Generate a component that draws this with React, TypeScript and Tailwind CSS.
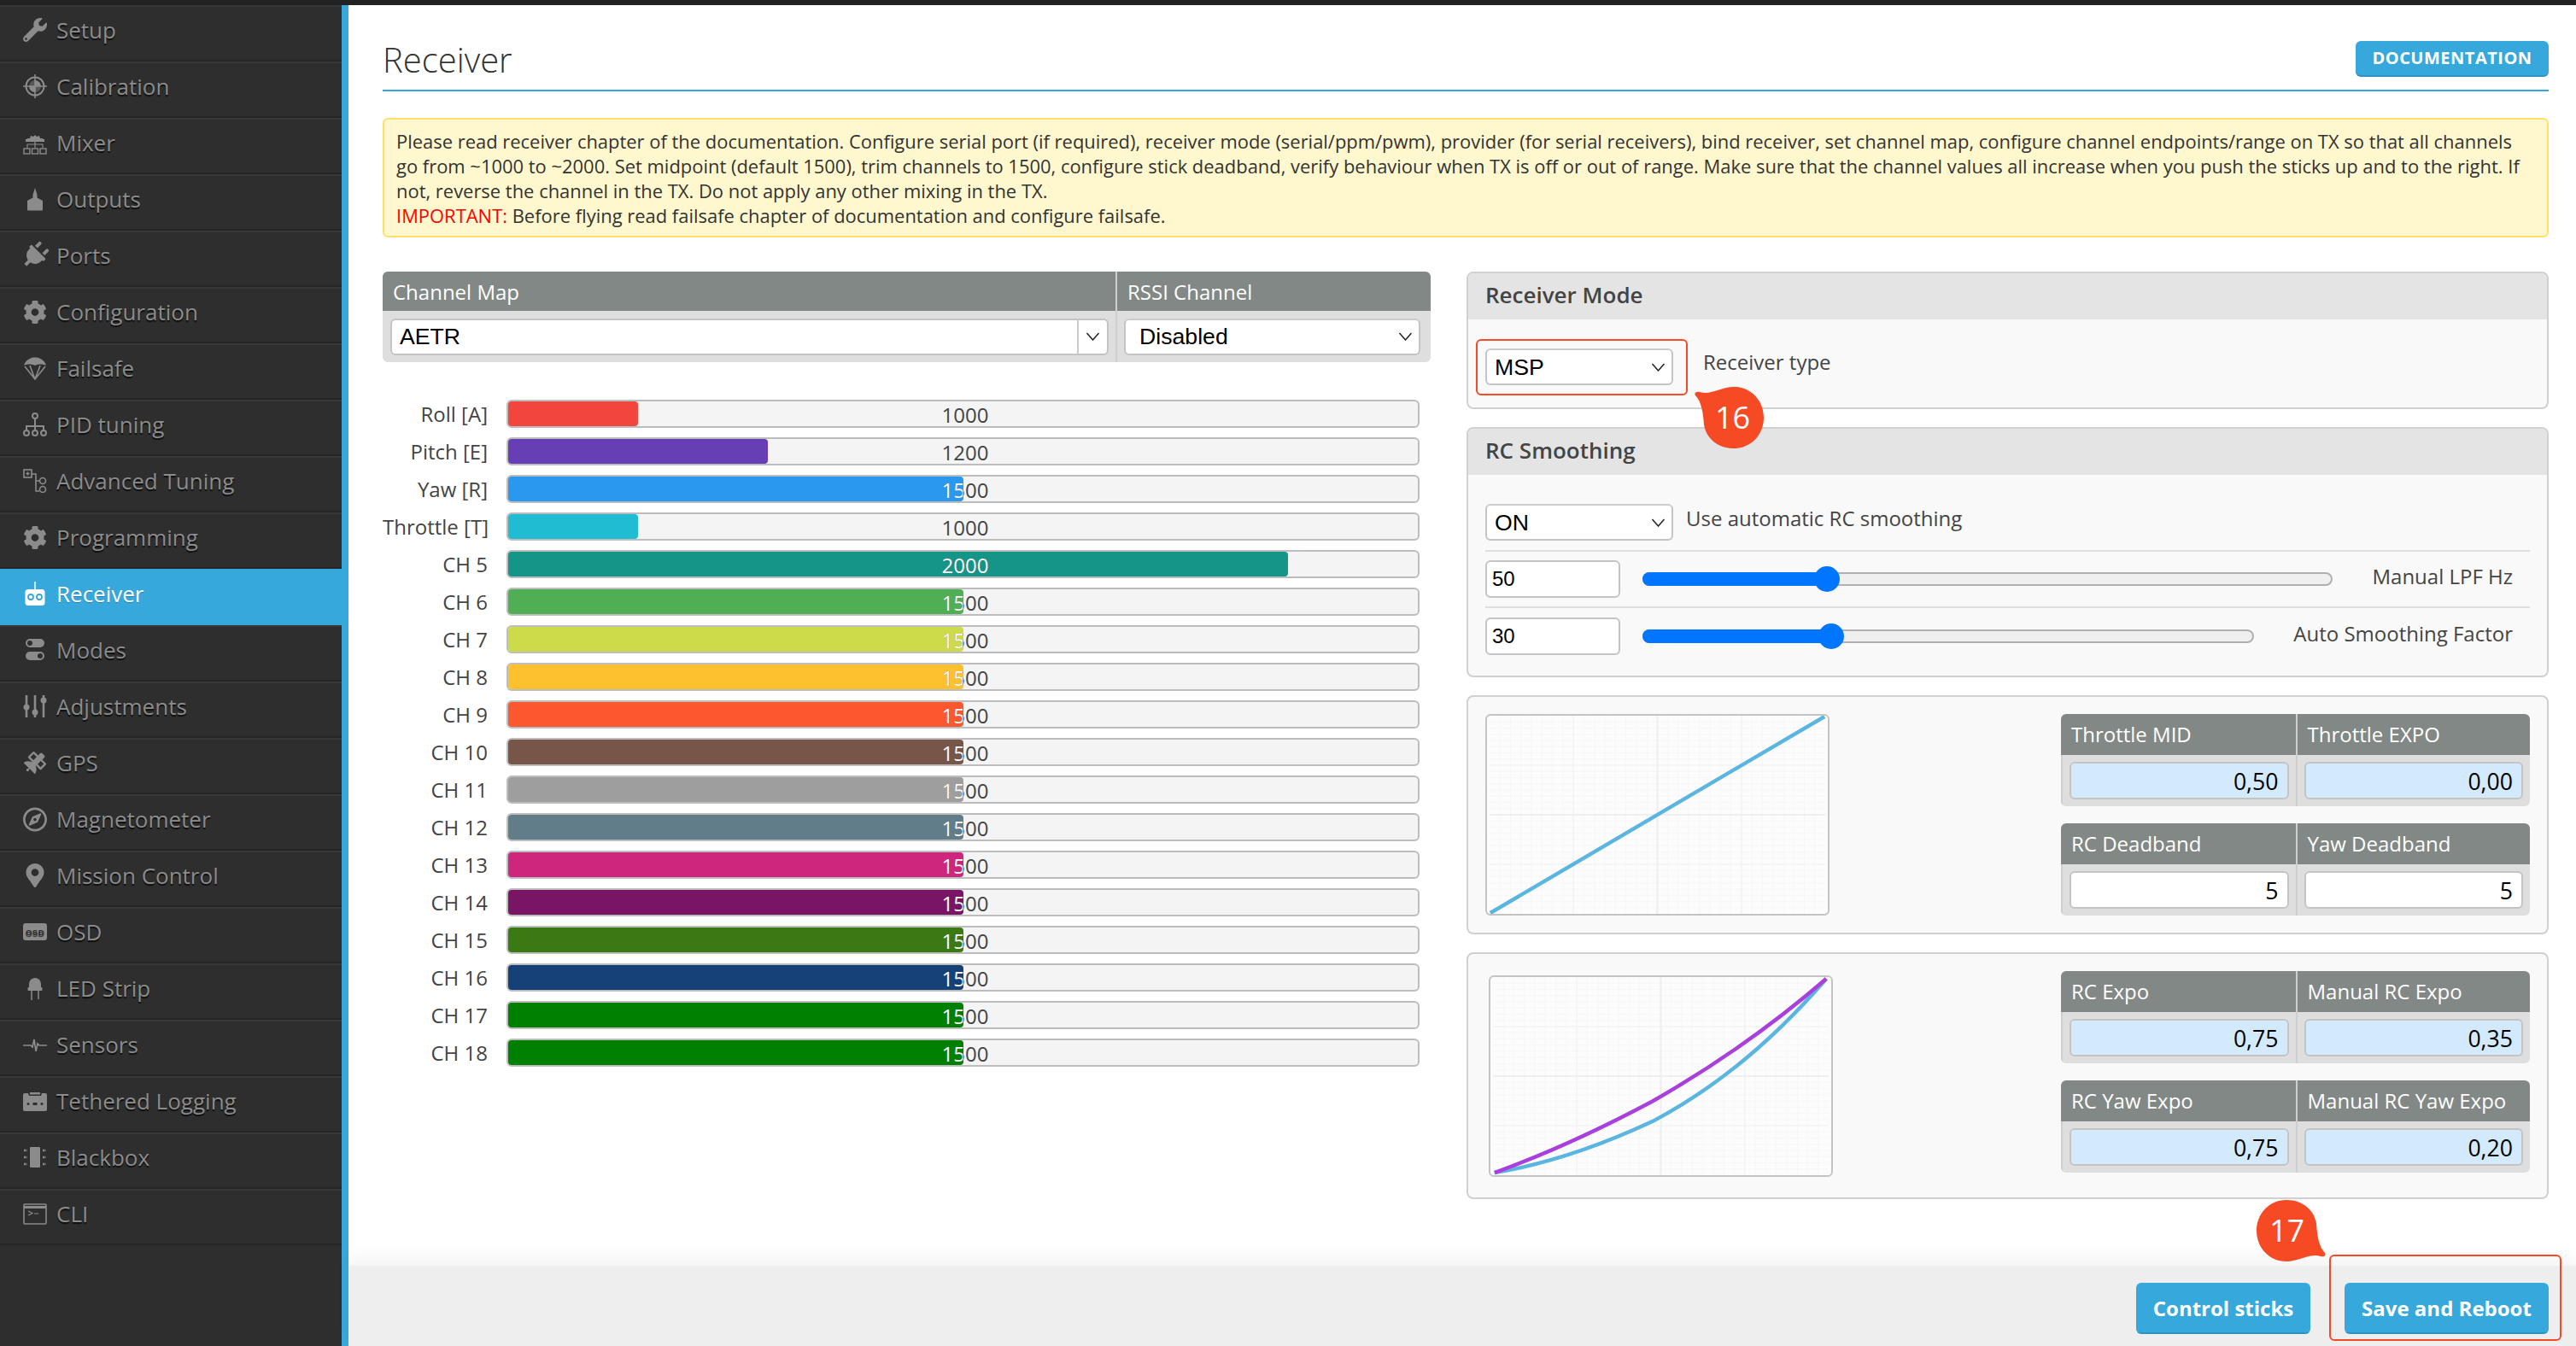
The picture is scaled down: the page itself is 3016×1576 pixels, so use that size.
import { ReactNode } from 'react';
import { FaCog, FaMapMarkerAlt, FaPlug, FaRegCompass, FaSatellite, FaWrench } from 'react-icons/fa';

const Svg = ({ children }: { children: ReactNode }) => (
  <svg width="28" height="28" viewBox="0 0 28 28" fill="currentColor">{children}</svg>
);

const icons: Record<string, ReactNode> = {
  Setup: <FaWrench size={28} />,
  Calibration: (
    <Svg>
      <circle cx="14" cy="14" r="10.5" fill="none" stroke="currentColor" strokeWidth="2" />
      <path d="M14 0v28M0 14h28" stroke="currentColor" strokeWidth="1.6" />
      <path d="M14 14V7a7 7 0 0 1 7 7ZM14 14v7a7 7 0 0 1-7-7Z" />
      <path d="M14 14V7a7 7 0 0 0-7 7ZM14 14v7a7 7 0 0 0 7-7Z" opacity=".45" />
    </Svg>
  ),
  Mixer: (
    <Svg>
      <path d="M4 12l1-3 3 0 1-3 3 1 2-2 2 2 3-1 1 3 3 0 1 3h-6a5 5 0 0 0-8 0Z" />
      <rect x="3" y="10" width="22" height="3" />
      <path d="M14 9v7M5 20v-4h18v4M14 16v4" fill="none" stroke="currentColor" strokeWidth="1.2" />
      <rect x="1" y="21" width="7" height="6" fill="none" stroke="currentColor" strokeWidth="1.4" />
      <rect x="10.5" y="21" width="7" height="6" fill="none" stroke="currentColor" strokeWidth="1.4" />
      <rect x="20" y="21" width="7" height="6" fill="none" stroke="currentColor" strokeWidth="1.4" />
    </Svg>
  ),
  Outputs: <Svg><path d="M14 1l2.5 8v3.5L23 16v10.5q0 1-1 1H6q-1 0-1-1V16l6.500-3.500V9Z" /></Svg>,
  Ports: <FaPlug size={32} className="rotate-45" />,
  Configuration: <FaCog size={29} />,
  Failsafe: (
    <Svg>
      <path d="M1 11C3 4 9 1.500 14 1.500S25 4 27 11C23 9 18 9 14 11 10 9 5 9 1 11Z" />
      <path d="M2 12l12 15L26 12M8 11l6 16 6-16" fill="none" stroke="currentColor" strokeWidth="1.6" />
    </Svg>
  ),
  'PID tuning': (
    <Svg>
      <g fill="none" stroke="currentColor" strokeWidth="2">
        <circle cx="14" cy="4" r="3" />
        <circle cx="4" cy="24" r="3" />
        <circle cx="14" cy="24" r="3" />
        <circle cx="24" cy="24" r="3" />
        <path d="M14 7v14M4 21v-5h20v5" />
      </g>
    </Svg>
  ),
  'Advanced Tuning': (
    <Svg>
      <g fill="none" stroke="currentColor" strokeWidth="1.6">
        <rect x="1" y="1" width="9" height="9" />
        <path d="M3.500 5.500h4M5.500 3.500v4M10 6h5v20h4M15 14h4" />
        <circle cx="23" cy="14" r="3.500" />
        <circle cx="23" cy="24" r="3.500" />
      </g>
    </Svg>
  ),
  Programming: <FaCog size={29} />,
  Receiver: (
    <Svg>
      <path d="M14 0v11" stroke="currentColor" strokeWidth="1.5" />
      <rect x="2.500" y="9" width="23" height="19" rx="3.500" />
      <circle cx="9" cy="18" r="3" fill="none" stroke="#37a8db" strokeWidth="1.800" />
      <circle cx="19" cy="18" r="3" fill="none" stroke="#37a8db" strokeWidth="1.800" />
    </Svg>
  ),
  Modes: (
    <Svg>
      <path fillRule="evenodd" d="M8 1h12a5 5 0 0 1 0 10H8A5 5 0 0 1 8 1Zm0 2a3 3 0 1 0 0 6 3 3 0 0 0 0-6ZM8 16h12a5 5 0 0 1 0 10H8a5 5 0 0 1 0-10Zm12 2a3 3 0 1 0 0 6 3 3 0 0 0 0-6Z" />
    </Svg>
  ),
  Adjustments: (
    <Svg>
      <path d="M4 1v26M14 1v26M24 1v26" stroke="currentColor" strokeWidth="2.600" />
      <circle cx="4" cy="15" r="3.500" />
      <circle cx="14" cy="21" r="3.500" />
      <circle cx="24" cy="7" r="3.500" />
    </Svg>
  ),
  GPS: <FaSatellite size={26} />,
  Magnetometer: <FaRegCompass size={29} />,
  'Mission Control': <FaMapMarkerAlt size={28} />,
  OSD: (
    <Svg>
      <rect x="0" y="4" width="28" height="20" rx="3" />
      <text x="14" y="17.500" textAnchor="middle" fontFamily="'Liberation Sans', sans-serif" fontWeight="700" fontSize="9.500" letterSpacing=".5" fill="#2e2e2e">OSD</text>
    </Svg>
  ),
  'LED Strip': (
    <Svg>
      <path d="M7 13V9a7 7 0 0 1 14 0v4Z" />
      <rect x="5.500" y="13" width="17" height="4" rx="1" />
      <path d="M10 17v11M18 17v10" stroke="currentColor" strokeWidth="1.500" />
    </Svg>
  ),
  Sensors: (
    <Svg>
      <path d="M0 15h9l2 2 2-9 2 14 2-9 2 2h9" fill="none" stroke="currentColor" strokeWidth="1.700" />
    </Svg>
  ),
  'Tethered Logging': (
    <Svg>
      <path fillRule="evenodd" d="M2 5h4l1 3h14l1-3h4q2 0 2 2v17q0 2-2 2H2q-2 0-2-2V7q0-2 2-2Zm4 11a1.500 1.500 0 1 0 0 3 1.500 1.500 0 0 0 0-3Zm5.500 0h5v3h-5Zm10.500 0a1.500 1.500 0 1 0 0 3 1.500 1.500 0 0 0 0-3Z" />
      <rect x="8" y="4" width="12" height="2.500" />
    </Svg>
  ),
  Blackbox: (
    <Svg>
      <rect x="8" y="2" width="12" height="24" rx="1" />
      <path d="M1 6h4M1 14h4M1 22h4M23 6h4M23 14h4M23 22h4" stroke="currentColor" strokeWidth="2.500" strokeDasharray="2.500 1" />
    </Svg>
  ),
  CLI: (
    <Svg>
      <rect x="1" y="3" width="26" height="23" rx="1" fill="none" stroke="currentColor" strokeWidth="1.600" />
      <path d="M1 6.500h26" stroke="currentColor" strokeWidth="3" />
      <path d="M6 11l5 2.500L6 16M13 14h5" fill="none" stroke="currentColor" strokeWidth="1.200" />
    </Svg>
  ),
};

const menu = [
  'Setup', 'Calibration', 'Mixer', 'Outputs', 'Ports', 'Configuration', 'Failsafe', 'PID tuning',
  'Advanced Tuning', 'Programming', 'Receiver', 'Modes', 'Adjustments', 'GPS', 'Magnetometer',
  'Mission Control', 'OSD', 'LED Strip', 'Sensors', 'Tethered Logging', 'Blackbox', 'CLI',
];

const channels = [
  { name: 'Roll [A]', value: 1000, color: '#f1453d' },
  { name: 'Pitch [E]', value: 1200, color: '#673fb4' },
  { name: 'Yaw [R]', value: 1500, color: '#2b98f0' },
  { name: 'Throttle [T]', value: 1000, color: '#1fbcd2' },
  { name: 'CH 5', value: 2000, color: '#159588' },
  { name: 'CH 6', value: 1500, color: '#50ae55' },
  { name: 'CH 7', value: 1500, color: '#cdda49' },
  { name: 'CH 8', value: 1500, color: '#fdc02f' },
  { name: 'CH 9', value: 1500, color: '#fc5830' },
  { name: 'CH 10', value: 1500, color: '#785549' },
  { name: 'CH 11', value: 1500, color: '#9e9e9e' },
  { name: 'CH 12', value: 1500, color: '#617d8a' },
  { name: 'CH 13', value: 1500, color: '#cf267d' },
  { name: 'CH 14', value: 1500, color: '#7a1464' },
  { name: 'CH 15', value: 1500, color: '#3b7913' },
  { name: 'CH 16', value: 1500, color: '#154078' },
  { name: 'CH 17', value: 1500, color: '#008000' },
  { name: 'CH 18', value: 1500, color: '#008000' },
];

const Chevron = () => (
  <svg width="17" height="10" viewBox="0 0 17 10" fill="none" stroke="#222" strokeWidth="1.500"><path d="M1.500 1 8.500 9l7-8" /></svg>
);

const Select = ({ value, className }: { value: string; className: string }) => (
  <div className={`flex h-[43px] items-center justify-between rounded-md border-2 border-[#c4c4c4] border-t-[#ccc] bg-white pl-[9px] pr-[7px] font-['Liberation_Sans',sans-serif] text-[26.67px] text-black ${className}`}>
    <span>{value}</span>
    <Chevron />
  </div>
);

const ChannelBar = ({ name, value, color }: { name: string; value: number; color: string }) => {
  const pct = ((value - 800) / 1400) * 100;
  return (
    <div className="flex h-[33px] items-center">
      <div className="w-[123px] whitespace-nowrap text-right text-[24px] text-[#444]">{name}</div>
      <div className="relative ml-[22px] h-[33px] w-[1069px] rounded-md border-2 border-[#bdbdbd] bg-[#f4f4f4]">
        <div className="absolute inset-y-0 left-0 rounded-[4px]" style={{ width: `${pct}%`, backgroundColor: color }} />
        <div className="absolute inset-0 pl-[5px] text-center text-[24px] leading-[31px] text-[#444]">{value}</div>
        <div className="absolute inset-0 pl-[5px] text-center text-[24px] leading-[31px] text-white" style={{ clipPath: `inset(0 ${100 - pct}% 0 0)` }}>{value}</div>
      </div>
    </div>
  );
};

const Panel = ({ title, className, children }: { title?: string; className?: string; children: ReactNode }) => (
  <section className="overflow-hidden rounded-lg border-2 border-[#d0d0d0] bg-[#f9f9f9]">
    {title && <h2 className="flex h-[54px] items-center bg-[#e4e4e4] pb-[3px] pl-[20px] text-[26px] font-semibold text-[#444]">{title}</h2>}
    <div className={className}>{children}</div>
  </section>
);

const ValueCell = ({ value, tinted }: { value: string; tinted?: boolean }) => (
  <div className="flex h-[60px] items-center justify-center border-l-2 border-[#cfcfcf] bg-[#dedede] px-[8px] first:border-l-0">
    <input
      readOnly
      value={value}
      className={`h-[44px] w-full rounded-md border-2 border-[#c4c4c4] pr-[10px] text-right text-[26.67px] text-black outline-none ${tinted ? 'bg-[#d3eafd]' : 'bg-white'}`}
    />
  </div>
);

const ValueTable = ({ cells, tinted }: { cells: [string, string][]; tinted?: boolean }) => (
  <div className="grid w-[549px] grid-cols-2 overflow-hidden rounded-md">
    {cells.map(([label], i) => (
      <div key={label} className={`flex h-[48px] items-center bg-[#828885] pl-[12px] text-[24px] text-white ${i ? 'border-l-2 border-[#cfcfcf]' : ''}`}>{label}</div>
    ))}
    {cells.map(([label, value]) => <ValueCell key={label} value={value} tinted={tinted} />)}
  </div>
);

const fineLines = Array.from({ length: 31 }, (_, i) => i + 1);

const CurveGrid = () => (
  <g fill="none">
    {fineLines.map((n) => (
      <g key={n} stroke="#f7f7f7" strokeWidth="1">
        <path d={`M${n * 12.5} 0V236`} />
        <path d={`M0 ${n * 7.375}H400`} />
      </g>
    ))}
    <path d="M100 0V236M300 0V236M0 59H400M0 177H400" stroke="#f3f3f3" strokeWidth="1.500" />
    <path d="M200 0V236M0 118H400" stroke="#efefef" strokeWidth="2" />
  </g>
);

const Bubble = ({ label, flip, className }: { label: string; flip?: boolean; className: string }) => (
  <div className={`absolute h-[72px] w-[82px] ${className}`}>
    <svg width="82" height="72" viewBox="0 0 82 72" className={flip ? 'rotate-180' : ''} fill="#f64a24">
      <path d="M35 0C55 0 68 13 70 28 71 42 73 55 80 62 82 65 79 67 75 66 62 62 50 72 35 72 15 72 0 56 0 36 0 16 15 0 35 0Z" />
    </svg>
    <span className={`absolute top-[14px] text-[36px] leading-[44px] text-white ${flip ? 'left-[25px]' : 'left-[15px]'}`}>{label}</span>
  </div>
);

function SliderRow({ value, label, trackWidth, fillWidth, divider }: { value: string; label: string; trackWidth: number; fillWidth: number; divider?: boolean }) {
  return (
    <div className={`flex h-[66px] items-center ${divider ? 'border-b-2 border-[#dedede]' : ''}`}>
      <input readOnly value={value} className="h-[44px] w-[158px] rounded-md border-2 border-[#c4c4c4] bg-white pl-[6px] font-['Liberation_Sans',sans-serif] text-[24px] text-black outline-none" />
      <div className="relative ml-[26px] h-[16px] rounded-full border-2 border-[#b0b0b0] bg-[#efefef]" style={{ width: trackWidth }}>
        <div className="absolute -inset-y-[2px] -left-[2px] rounded-l-full bg-[#0075ff]" style={{ width: fillWidth }} />
        <div className="absolute -top-[9px] h-[30px] w-[30px] rounded-full bg-[#0075ff]" style={{ left: fillWidth - 17 }} />
      </div>
      <span className="mb-[6px] ml-auto pr-[20px] text-[24px] text-[#444]">{label}</span>
    </div>
  );
}

export default function App() {
  return (
    <div className="relative flex h-[1576px] w-[3016px] flex-col overflow-hidden bg-white font-['Open_Sans',sans-serif]">
      <div className="h-[6px] shrink-0 bg-[#222]" />
      <div className="flex min-h-0 flex-1">
        {/* sidebar */}
        <nav className="w-[408px] shrink-0 border-r-8 border-[#37a8db] bg-[#2e2e2e]">
          {menu.map((item) => {
            const active = item === 'Receiver';
            return (
              <div
                key={item}
                className={`flex h-[66px] items-center gap-[11px] pb-[8px] pl-[27px] text-[26px] ${active ? 'bg-[#37a8db] text-white [text-shadow:0_1px_0_rgba(0,0,0,0.25)]' : 'border-t-2 border-b-2 border-t-[#383838] border-b-[#252525] text-[#8b8b8b] [text-shadow:0_2px_1px_rgba(0,0,0,0.7)]'}`}
              >
                <span className="flex w-[28px] shrink-0 items-center justify-center">{icons[item]}</span>
                {item}
              </div>
            );
          })}
        </nav>

        <div className="flex min-w-0 flex-1 flex-col">
          <main className="min-h-0 flex-1 pl-[40px] pr-[32px]">
            <header className="flex h-[101px] items-end justify-between border-b-2 border-[#37a8db] pb-[5px]">
              <h1 className="text-[40px] font-light text-[#333]">Receiver</h1>
              <a className="mb-[10px] flex h-[42px] w-[226px] items-center justify-center rounded-md border-b-2 border-[#2f93c2] bg-[#37a8db] text-[20px] font-bold tracking-[0.5px] text-white">DOCUMENTATION</a>
            </header>

            <div className="mt-[31px] h-[140px] rounded-md border-2 border-[#ffe169] bg-[#fff7cd] px-[14px] py-[11px] text-[21.95px] leading-[29px] text-[#333] whitespace-nowrap">
              <p>Please read receiver chapter of the documentation. Configure serial port (if required), receiver mode (serial/ppm/pwm), provider (for serial receivers), bind receiver, set channel map, configure channel endpoints/range on TX so that all channels</p>
              <p>go from ~1000 to ~2000. Set midpoint (default 1500), trim channels to 1500, configure stick deadband, verify behaviour when TX is off or out of range. Make sure that the channel values all increase when you push the sticks up and to the right. If</p>
              <p>not, reverse the channel in the TX. Do not apply any other mixing in the TX.</p>
              <p><span className="text-[#ff0000]">IMPORTANT:</span> Before flying read failsafe chapter of documentation and configure failsafe.</p>
            </div>

            <div className="mt-[40px] flex gap-[42px]">
              {/* left column */}
              <div className="w-[1227px] shrink-0">
                <div className="grid grid-cols-[858px_1fr] overflow-hidden rounded-md text-[24px] text-white">
                  <div className="flex h-[46px] items-center bg-[#828885] pl-[12px] pt-[2px]">Channel Map</div>
                  <div className="flex h-[46px] items-center border-l-2 border-[#cfcfcf] bg-[#828885] pl-[12px] pt-[2px]">RSSI Channel</div>
                  <div className="flex h-[60px] items-center bg-[#dedede] pl-[9px] pr-[8px]">
                    <div className="flex h-[43px] w-full items-center rounded-md border-2 border-[#c4c4c4] bg-white font-['Liberation_Sans',sans-serif] text-[26.67px] text-black">
                      <span className="flex-1 pl-[9px]">AETR</span>
                      <span className="flex h-full w-[35px] items-center justify-center border-l-2 border-[#ccc]"><Chevron /></span>
                    </div>
                  </div>
                  <div className="flex h-[60px] items-center border-l-2 border-[#cfcfcf] bg-[#dedede] pl-[8px] pr-[12px]">
                    <Select value="Disabled" className="w-full pl-[16px]" />
                  </div>
                </div>
                <div className="mt-[44px] flex flex-col gap-[11px]">
                  {channels.map((c) => <ChannelBar key={c.name} {...c} />)}
                </div>
              </div>

              {/* right column */}
              <div className="flex min-w-0 flex-1 flex-col gap-[21px]">
                <Panel title="Receiver Mode" className="flex h-[103px] gap-[35px] pl-[20px] pt-[34px]">
                  <Select value="MSP" className="w-[220px]" />
                  <span className="mt-[1px] text-[24px] leading-[30px] text-[#444]">Receiver type</span>
                </Panel>

                <Panel title="RC Smoothing" className="flex h-[235px] flex-col px-[20px] pt-[34px]">
                  <div className="flex gap-[15px] border-b-2 border-[#dedede] pb-[11px]">
                    <Select value="ON" className="w-[220px]" />
                    <span className="text-[24px] leading-[34px] text-[#444]">Use automatic RC smoothing</span>
                  </div>
                  <SliderRow value="50" label="Manual LPF Hz" trackWidth={808} fillWidth={216} divider />
                  <SliderRow value="30" label="Auto Smoothing Factor" trackWidth={716} fillWidth={221} />
                </Panel>

                <Panel className="flex h-[276px] justify-between px-[20px] pt-[20px]">
                  <svg width="403" height="236" viewBox="0 0 400 236" className="rounded-md border-2 border-[#c4c4c4] bg-[#fcfcfc]">
                    <CurveGrid />
                    <path d="M1 235 399 1" stroke="#5ab5e0" strokeWidth="4.500" fill="none" />
                  </svg>
                  <div className="flex flex-col gap-[20px]">
                    <ValueTable tinted cells={[['Throttle MID', '0,50'], ['Throttle EXPO', '0,00']]} />
                    <ValueTable cells={[['RC Deadband', '5'], ['Yaw Deadband', '5']]} />
                  </div>
                </Panel>

                <Panel className="flex h-[285px] justify-between pl-[24px] pr-[20px] pt-[20px]">
                  <svg width="403" height="236" viewBox="0 0 400 236" className="mt-[5px] rounded-md border-2 border-[#c4c4c4] bg-[#fcfcfc]">
                    <CurveGrid />
                    <path d="M2 233C70 222 130 200 190 172 260 135 330 80 397 2" stroke="#5ab5e0" strokeWidth="4.500" fill="none" />
                    <path d="M2 233C60 212 130 180 190 148 260 108 330 60 397 2" stroke="#a93fdc" strokeWidth="4.500" fill="none" />
                  </svg>
                  <div className="flex flex-col gap-[20px]">
                    <ValueTable tinted cells={[['RC Expo', '0,75'], ['Manual RC Expo', '0,35']]} />
                    <ValueTable tinted cells={[['RC Yaw Expo', '0,75'], ['Manual RC Yaw Expo', '0,20']]} />
                  </div>
                </Panel>
              </div>
            </div>
          </main>

          <footer className="flex h-[96px] shrink-0 items-start justify-end gap-[40px] border-t-2 border-[#f7f7f7] bg-[#eee] pr-[32px] pt-[20px] shadow-[0_-10px_16px_rgba(0,0,0,0.04)]">
            <button className="h-[60px] w-[204px] rounded-md border-2 border-[#37a8db] border-b-[#2f93c2] bg-[#37a8db] text-[24px] font-bold text-white">Control sticks</button>
            <button className="h-[60px] w-[239px] rounded-md border-2 border-[#37a8db] border-b-[#2f93c2] bg-[#37a8db] text-[24px] font-bold text-white">Save and Reboot</button>
          </footer>
        </div>
      </div>

      {/* tutorial callouts */}
      <div className="absolute left-[1728px] top-[397px] h-[66px] w-[248px] rounded-md border-2 border-[#f64a24]" />
      <div className="absolute left-[2727px] top-[1469px] h-[101px] w-[272px] rounded-md border-2 border-[#f64a24]" />
      <Bubble label="16" flip className="left-[1983px] top-[453px]" />
      <Bubble label="17" className="left-[2642px] top-[1405px]" />
    </div>
  );
}
